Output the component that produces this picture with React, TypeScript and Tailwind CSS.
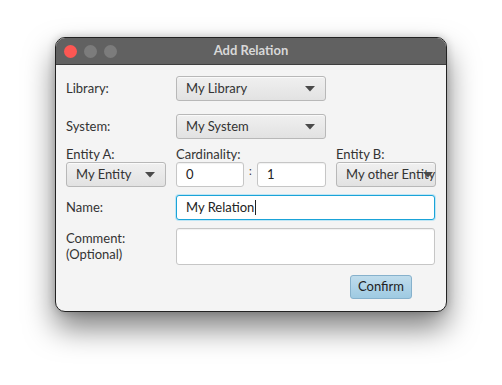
const FONT = { fontFamily: 'Lato, "Open Sans", sans-serif' };

function Caret() {
  return (
    <svg width="10" height="6" viewBox="0 0 10 6" className="shrink-0">
      <path d="M0 0 L10 0 L5 5.5 Z" fill="#4a4a4a" />
    </svg>
  );
}

function Combo({ label, w, clip }: { label: string; w: string; clip?: boolean }) {
  return (
    <div
      className={`${w} flex h-[25px] items-center justify-between rounded-[3px] border border-[#b8b8b8] bg-gradient-to-b from-[#f0f0f0] to-[#e2e2e2] pl-[9px] pr-[10px] text-[13px] text-[#333] shadow-[inset_0_1px_0_#fafafa]`}
    >
      <span className={clip ? 'whitespace-nowrap' : ''}>{label}</span>
      {clip ? (
        <span className="-ml-[12px]">
          <Caret />
        </span>
      ) : (
        <Caret />
      )}
    </div>
  );
}

function Field({ value, w, tall, focus }: { value?: string; w: string; tall?: boolean; focus?: boolean }) {
  return (
    <div
      className={`${w} ${tall ? 'h-[37px] items-start' : 'h-[25px] items-center'} flex rounded-[3px] bg-white px-[9px] text-[13px] text-[#222] ${
        focus
          ? 'border border-[#1aa3d8] shadow-[0_0_0_1px_#bfe6f5]'
          : 'border border-[#c6c6c6] shadow-[inset_0_1px_1px_rgba(0,0,0,0.06)]'
      }`}
    >
      {value}
      {focus ? <span className="ml-px inline-block h-[15px] w-px bg-[#222]" /> : null}
    </div>
  );
}

export default function App() {
  return (
    <div className="flex h-[385px] w-[502px] justify-center bg-white pt-[37px]" style={FONT}>
      <div className="flex h-[275px] w-[392px] flex-col overflow-hidden rounded-[10px] border border-[#222] bg-[#f4f4f4] shadow-[0_16px_30px_rgba(0,0,0,0.5),0_0_8px_rgba(0,0,0,0.2)]">
        {/* title bar */}
        <div className="relative flex h-[27px] shrink-0 items-center border-b border-[#3d3d3d] bg-[#616161] pl-[8px]">
          <div className="flex gap-[7px]">
            <span className="size-[13px] rounded-full bg-[#fc5753]" />
            <span className="size-[13px] rounded-full bg-[#7c7c7c]" />
            <span className="size-[13px] rounded-full bg-[#7c7c7c]" />
          </div>
          <span className="absolute inset-x-0 text-center text-[13px] font-bold text-[#d8d8d8]">
            Add Relation
          </span>
        </div>

        {/* form */}
        <div className="flex flex-col px-[10px] pt-[11px] text-[13px] text-[#333]">
          <div className="flex items-center">
            <span className="w-[110px]">Library:</span>
            <Combo label="My Library" w="w-[150px]" />
          </div>
          <div className="mt-[13px] flex items-center">
            <span className="w-[110px]">System:</span>
            <Combo label="My System" w="w-[150px]" />
          </div>

          <div className="mt-[7px] flex">
            <div className="flex w-[110px] flex-col">
              <span className="h-[16px] leading-[16px]">Entity A:</span>
              <Combo label="My Entity" w="w-[100px]" />
            </div>
            <div className="flex w-[160px] flex-col">
              <span className="h-[16px] leading-[16px]">Cardinality:</span>
              <div className="flex items-center">
                <Field value="0" w="w-[68px]" />
                <span className="w-[13px] -translate-y-[3px] text-center text-[11px]">:</span>
                <Field value="1" w="w-[69px]" />
              </div>
            </div>
            <div className="flex flex-col">
              <span className="h-[16px] leading-[16px]">Entity B:</span>
              <Combo label="My other Entity" w="w-[100px]" clip />
            </div>
          </div>

          <div className="mt-[8px] flex items-center">
            <span className="w-[110px]">Name:</span>
            <Field value="My Relation" w="w-[259px]" focus />
          </div>

          <div className="mt-[8px] flex items-start">
            <span className="w-[110px] pt-[2px] leading-[16px]">
              Comment:
              <br />
              (Optional)
            </span>
            <Field w="w-[259px]" tall />
          </div>

          <div className="mt-[10px] flex justify-end pr-[24px]">
            <div className="flex h-[24px] w-[62px] items-center justify-center rounded-[3px] border border-[#86b1cc] bg-gradient-to-b from-[#bfdcec] to-[#9ecae2] text-[13px] text-[#222]">
              Confirm
            </div>
          </div>
        </div>
      </div>
    </div>
  );
}
